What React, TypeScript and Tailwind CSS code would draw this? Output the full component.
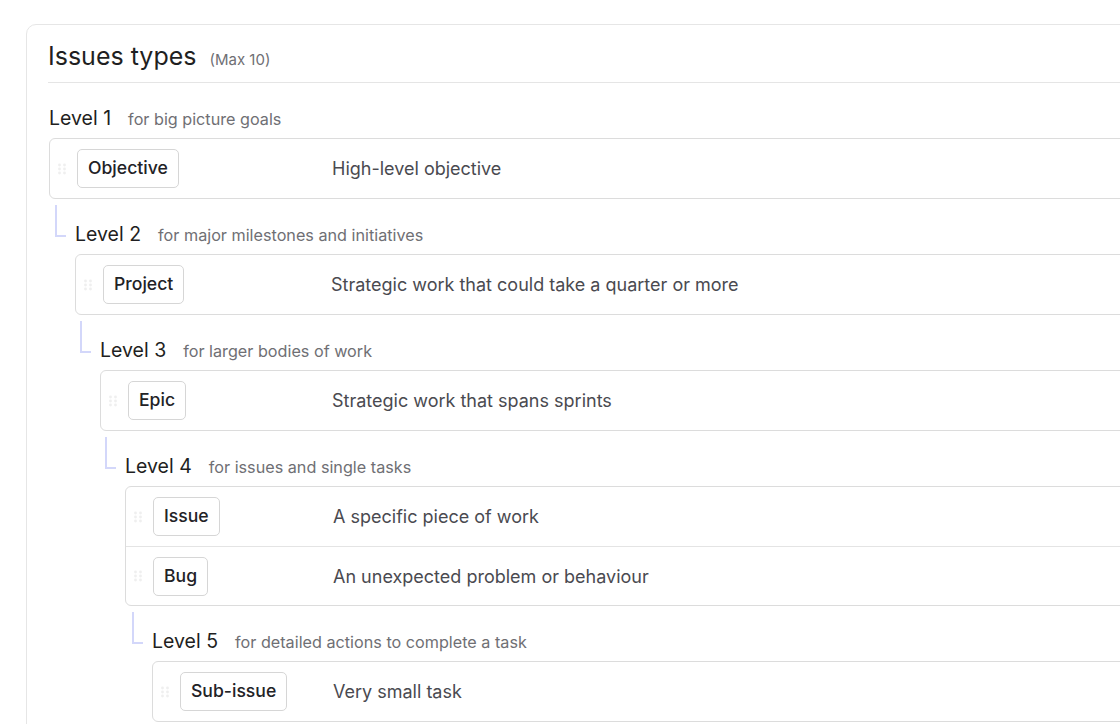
import React from "react";

type IssueType = { name: string; description: string };

type Level = {
  level: number;
  hint: string;
  indent: string;
  badgeCol: string;
  types: IssueType[];
};

const levels: Level[] = [
  {
    level: 1,
    hint: "for big picture goals",
    indent: "ml-0",
    badgeCol: "w-[282px]",
    types: [{ name: "Objective", description: "High-level objective" }],
  },
  {
    level: 2,
    hint: "for major milestones and initiatives",
    indent: "ml-[26px]",
    badgeCol: "w-[255px]",
    types: [{ name: "Project", description: "Strategic work that could take a quarter or more" }],
  },
  {
    level: 3,
    hint: "for larger bodies of work",
    indent: "ml-[51px]",
    badgeCol: "w-[231px]",
    types: [{ name: "Epic", description: "Strategic work that spans sprints" }],
  },
  {
    level: 4,
    hint: "for issues and single tasks",
    indent: "ml-[76px]",
    badgeCol: "w-[207px]",
    types: [
      { name: "Issue", description: "A specific piece of work" },
      { name: "Bug", description: "An unexpected problem or behaviour" },
    ],
  },
  {
    level: 5,
    hint: "for detailed actions to complete a task",
    indent: "ml-[103px]",
    badgeCol: "w-[180px]",
    types: [{ name: "Sub-issue", description: "Very small task" }],
  },
];

const DragHandle = () => (
  <svg width="8" height="12" viewBox="0 0 8 12" className="shrink-0">
    {[2, 6, 10].map((y) =>
      [1.5, 6.5].map((x) => <circle key={`${x}-${y}`} cx={x} cy={y} r="1.4" fill="#efefef" />)
    )}
  </svg>
);

const LevelBlock = ({ item, first }: { item: Level; first: boolean }) => {
  return (
    <div className={`${item.indent} ${first ? "" : "mt-[24px]"}`}>
      <div className="relative flex h-6 items-center gap-[17px]">
        {!first && (
          <span className="absolute left-[-20px] top-[-18px] h-[32px] w-[11px] border-b-2 border-l-2 border-[#d3d7fa]" />
        )}
        <span className="text-[19.5px] text-[#1f1f22]">Level {item.level}</span>
        <span className="text-[16.2px] text-[#6f6f74]">{item.hint}</span>
      </div>
      <div className="mt-[7px] rounded-[6px] border border-[#dcdcdc]">
        {item.types.map((t, i) => (
          <div
            key={t.name}
            className={`flex h-[59px] items-center ${i > 0 ? "border-t border-[#e4e4e4]" : ""}`}
          >
            <div className={`flex shrink-0 items-center gap-[11px] pl-[8px] ${item.badgeCol}`}>
              <DragHandle />
              <span className="flex h-[39px] items-center rounded-[5px] border border-[#d6d6d6] px-[10px] text-[17.6px] font-medium text-[#222226]">
                {t.name}
              </span>
            </div>
            <span className="whitespace-nowrap text-[18px] text-[#4a4a50]">{t.description}</span>
          </div>
        ))}
      </div>
    </div>
  );
};

export default function App() {
  return (
    <div className="h-[724px] w-[1120px] overflow-hidden bg-white font-['Inter',sans-serif]">
      <div className="ml-[26px] mt-[24px] w-[1200px] rounded-[10px] border border-[#e6e6e6] pb-10 pl-[21px] pt-[15px]">
        <div className="flex items-baseline gap-[13px] border-b border-[#e5e5e5] pb-[10px]">
          <h1 className="text-[25px] leading-8 text-[#1f1f22]">Issues types</h1>
          <span className="text-[15px] text-[#6f6f74]">(Max 10)</span>
        </div>
        <div className="pl-[1px] pt-[24px]">
          {levels.map((item, i) => (
            <LevelBlock key={item.level} item={item} first={i === 0} />
          ))}
        </div>
      </div>
    </div>
  );
}
